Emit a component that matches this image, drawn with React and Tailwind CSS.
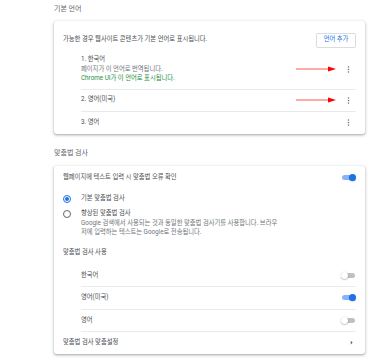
import React from 'react'

function Dots() {
  return (
    <div className="w-[16px] h-[16px] flex items-center justify-center shrink-0">
      <svg width="3" height="7" viewBox="0 0 3 7">
        <circle cx="1.5" cy="1" r="0.8" fill="#6f7378" />
        <circle cx="1.5" cy="3.5" r="0.8" fill="#6f7378" />
        <circle cx="1.5" cy="6" r="0.8" fill="#6f7378" />
      </svg>
    </div>
  )
}

function RedArrow() {
  return (
    <svg width="40" height="6" viewBox="0 0 40 6" className="shrink-0">
      <line x1="0" y1="3" x2="33" y2="3" stroke="#ff2a2a" strokeWidth="0.8" />
      <polygon points="32,0.6 40,3 32,5.4" fill="#ff0000" />
    </svg>
  )
}

function Toggle({ on }) {
  return (
    <div className="relative w-[15px] h-[7px] shrink-0">
      <div
        className={
          on
            ? 'absolute left-[1px] right-[1px] top-[1px] h-[5px] rounded-full bg-[#8ab4f8]'
            : 'absolute left-[1px] right-[1px] top-[1px] h-[5px] rounded-full bg-[#bdc1c6]'
        }
      />
      <div
        className={
          on
            ? 'absolute right-0 top-0 w-[7px] h-[7px] rounded-full bg-[#1a73e8] shadow-[0_0.5px_1px_rgba(0,0,0,0.3)]'
            : 'absolute left-0 top-0 w-[7px] h-[7px] rounded-full bg-white shadow-[0_0.5px_1.5px_rgba(0,0,0,0.4)]'
        }
      />
    </div>
  )
}

function Radio({ checked }) {
  if (checked) {
    return (
      <div className="w-[7.5px] h-[7.5px] rounded-full border border-[#1a73e8] flex items-center justify-center">
        <div className="w-[4px] h-[4px] rounded-full bg-[#1a73e8]" />
      </div>
    )
  }
  return <div className="w-[7.5px] h-[7.5px] rounded-full border border-[#5f6368]" />
}

const card = 'bg-white rounded-[3px] shadow-[0_1px_2px_rgba(60,64,67,0.3),0_1px_3px_1px_rgba(60,64,67,0.15)]'

export default function App() {
  const languages = [
    { name: '한국어', on: false },
    { name: '영어(미국)', on: true },
    { name: '영어', on: false },
  ]

  return (
    <div className="min-h-[363px] w-full bg-white text-[6.3px] text-[#4a4d51] font-[family-name:Roboto,'Noto_Sans_CJK_KR',sans-serif]">
      <div className="ml-[54px] w-[311px] pt-[4px]">

        {/* 기본 언어 */}
        <h2 className="h-[10px] leading-[10px] text-[7px] text-[#5f6368] mb-[7px]">기본 언어</h2>
        <div className={`${card} pt-[11px] px-[9px]`}>
          <div className="flex items-center justify-between h-[16px]">
            <span>가능한 경우 웹사이트 콘텐츠가 기본 언어로 표시됩니다.</span>
            <button className="h-[15px] w-[40px] border border-[#dadce0] rounded-[2px] text-[#1a73e8] text-[6.3px]">
              언어 추가
            </button>
          </div>

          <div className="ml-[18px] mt-[7px]">
            <div className="flex items-center justify-between pb-[5px] border-b border-[#e8eaed]">
              <div className="leading-[9.5px]">
                <div>1. 한국어</div>
                <div className="text-[#70757a]">페이지가 이 언어로 번역됩니다.</div>
                <div className="text-[#1e8e3e]">Chrome UI가 이 언어로 표시됩니다.</div>
              </div>
              <div className="flex items-center gap-[4px]">
                <RedArrow />
                <Dots />
              </div>
            </div>
            <div className="flex items-center justify-between h-[22px] border-b border-[#e8eaed]">
              <span>2. 영어(미국)</span>
              <div className="flex items-center gap-[4px]">
                <RedArrow />
                <Dots />
              </div>
            </div>
            <div className="flex items-center justify-between h-[22px]">
              <span>3. 영어</span>
              <Dots />
            </div>
          </div>
        </div>

        {/* 맞춤법 검사 */}
        <h2 className="mt-[14.5px] h-[10px] leading-[10px] text-[7px] text-[#5f6368] mb-[8px]">맞춤법 검사</h2>
        <div className={`${card} px-[9px]`}>
          <div className="flex items-center justify-between h-[23px]">
            <span>웹페이지에 텍스트 입력 시 맞춤법 오류 확인</span>
            <Toggle on />
          </div>

          <div className="flex items-center h-[20px]">
            <div className="w-[18px]">
              <Radio checked />
            </div>
            <span>기본 맞춤법 검사</span>
          </div>

          <div className="flex items-start">
            <div className="w-[18px] h-[9.5px] flex items-center">
              <Radio />
            </div>
            <div className="leading-[9.5px]">
              <div>향상된 맞춤법 검사</div>
              <div className="text-[#70757a]">Google 검색에서 사용되는 것과 동일한 맞춤법 검사기를 사용합니다. 브라우</div>
              <div className="text-[#70757a]">저에 입력하는 텍스트는 Google로 전송됩니다.</div>
            </div>
          </div>

          <div className="mt-[4px] h-[23px] flex items-center">맞춤법 검사 사용</div>

          <div className="ml-[18px]">
            {languages.map(lang => (
              <div key={lang.name} className="flex items-center justify-between h-[22.5px] border-b border-[#e8eaed]">
                <span>{lang.name}</span>
                <Toggle on={lang.on} />
              </div>
            ))}
          </div>

          <div className="flex items-center justify-between h-[21.5px]">
            <span>맞춤법 검사 맞춤설정</span>
            <svg width="9" height="9" viewBox="0 0 24 24">
              <path d="M10 17l5-5-5-5v10z" fill="#5f6368" />
            </svg>
          </div>
        </div>

      </div>
    </div>
  )
}
